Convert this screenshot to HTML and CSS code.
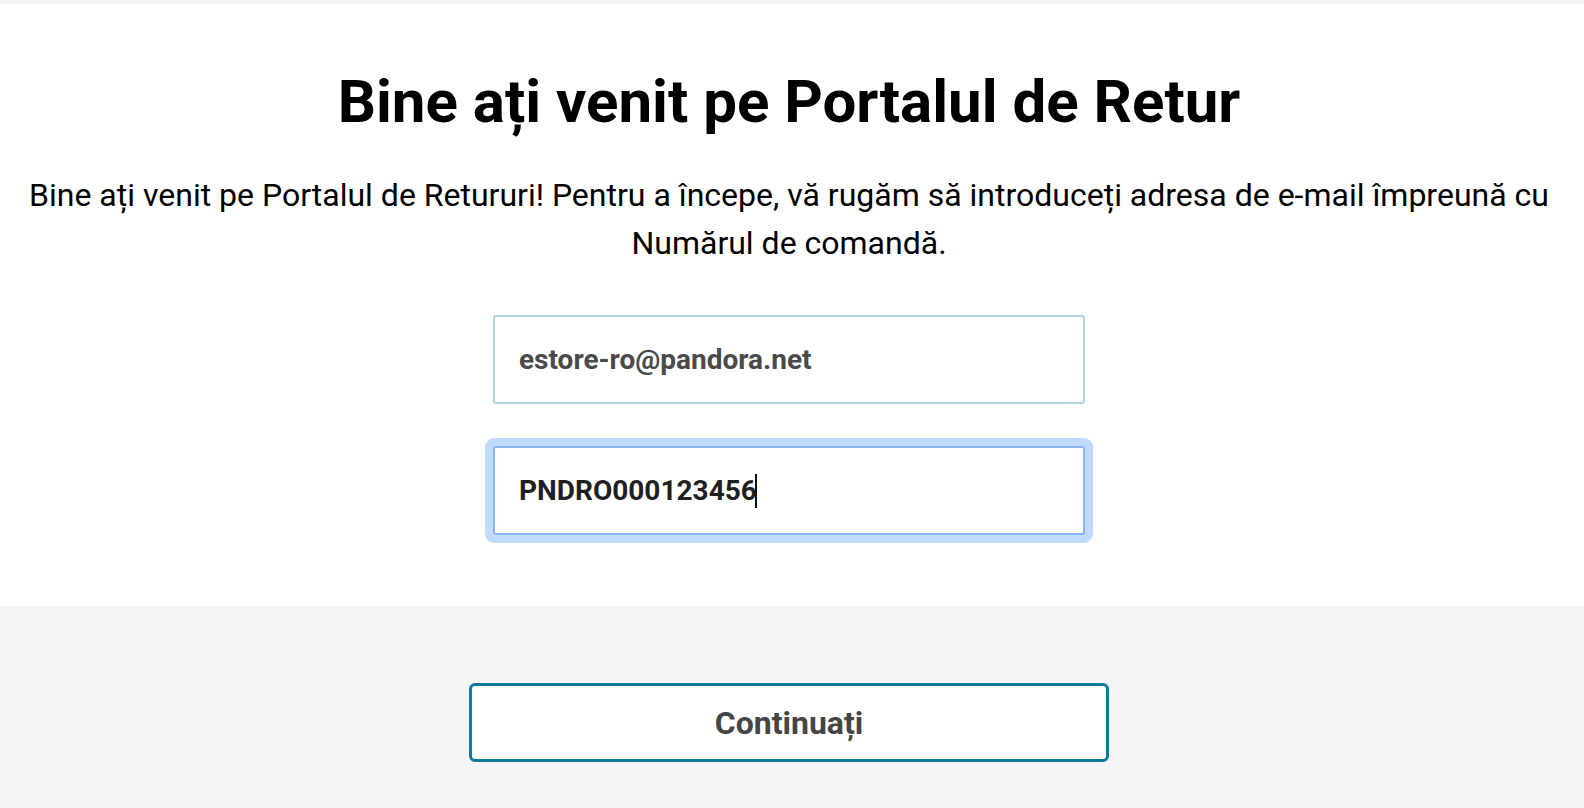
FILE: index.html
```html
<!DOCTYPE html>
<html lang="ro">
<head>
  <meta charset="UTF-8">
  <meta name="viewport" content="width=device-width, initial-scale=1.0">
  <title>Portalul de Retur</title>
  <link rel="stylesheet" href="styles.css">
</head>
<body>
  <div class="topbar"></div>

  <!-- introducere + formular de autentificare -->
  <main class="intro">
    <h1>Bine ați venit pe Portalul de Retur</h1>
    <p class="lead">Bine ați venit pe Portalul de Retururi! Pentru a începe, vă rugăm să introduceți adresa de e-mail împreună cu Numărul de comandă.</p>

    <form id="lookupForm" class="lookup">
      <input class="field" type="email" name="email" value="estore-ro@pandora.net">
      <div class="field-wrap">
        <input class="field field-order is-focused" type="text" name="order" value="PNDRO000123456">
        <span class="caret"></span>
      </div>
    </form>
  </main>

  <div class="actions">
    <button type="submit" form="lookupForm" class="btn-continue">Continuați</button>
  </div>
</body>
</html>
```

FILE: styles.css
```css
body {
  margin: 0;
  font-family: Roboto, "Liberation Sans", Arial, sans-serif;
  background-color: #f5f5f5;
  color: #000;
}
.topbar {
  height: 4px;
  background-color: #f5f5f5;
}
.intro {
  background-color: #fff;
  text-align: center;
  padding: 62px 26px 71px 20px;
}
h1 {
  margin: 0;
  font-size: 60px;
  font-weight: 700;
  line-height: 72px;
}
.lead {
  margin: 33px auto 0;
  font-size: 32px;
  line-height: 48px;
}
.lookup {
  width: 592px;
  margin: 48px auto 0;
  display: flex;
  flex-direction: column;
  gap: 42px;
}
.field-wrap {
  position: relative;
}
.field {
  box-sizing: border-box;
  display: block;
  width: 100%;
  height: 89px;
  padding: 0 24px;
  border: 2px solid #aed4e0;
  border-radius: 3px;
  font-family: inherit;
  font-size: 28px;
  font-weight: 700;
  color: #4a4a4a;
  background: #fff;
  outline: none;
}
.field-order {
  color: #1f1f1f;
  caret-color: transparent;
}
.is-focused {
  border-color: #8ab4f3;
  box-shadow: 0 0 0 8px #c0dafd;
}
/* text cursor right after the order number */
.caret {
  position: absolute;
  left: 262px;
  top: 28px;
  width: 2px;
  height: 34px;
  background-color: #111;
}
.actions {
  padding: 77px 26px 46px 20px;
  display: flex;
  justify-content: center;
}
.btn-continue {
  width: 640px;
  height: 79px;
  background-color: #fff;
  border: 3px solid #0f7a9c;
  border-radius: 6px;
  font-family: inherit;
  font-size: 32px;
  font-weight: 700;
  color: #454545;
  cursor: pointer;
}
```
